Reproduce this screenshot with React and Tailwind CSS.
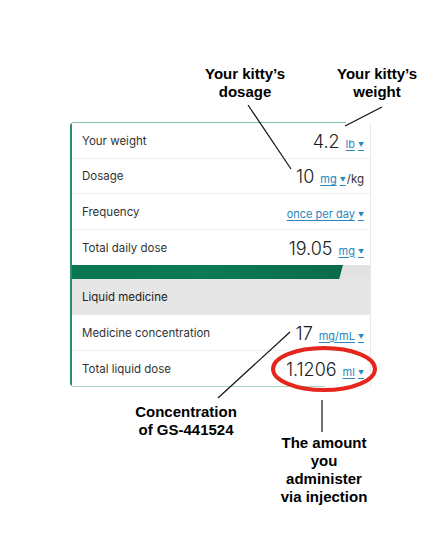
import React from 'react';

const Unit = ({ children }) => (
  <span className="text-[11px] text-[#2a86bb] underline underline-offset-2 decoration-[#2a86bb]">
    {children}
    <span className="ml-[3px] text-[6px] relative -top-[1px]">▼</span>
  </span>
);

function Row({ label, value, unit, suffix, last }) {
  return (
    <div className={`h-[35.5px] flex items-center justify-between pt-[2px] pl-[10px] pr-[6px] bg-white ${last ? '' : 'border-b border-[#f0f0f0]'}`}>
      <span className="text-[11.5px] text-[#333]">{label}</span>
      <div className="flex items-baseline gap-[6px]">
        {value && <span className="text-[18px] font-light text-[#1a1a1a]">{value}</span>}
        <span>
          <Unit>{unit}</Unit>
          {suffix && <span className="text-[11.5px] text-[#333] ml-[1px]">{suffix}</span>}
        </span>
      </div>
    </div>
  );
}

function Note({ className, children }) {
  return (
    <div className={`absolute text-center font-bold text-[15px] leading-[18px] text-black ${className}`}
      style={{ fontFamily: '"Liberation Sans", Arial, sans-serif' }}>
      {children}
    </div>
  );
}

export default function App() {
  return (
    <div className="relative w-[440px] h-[546px] bg-white overflow-hidden" style={{ fontFamily: 'Inter, "Noto Sans", sans-serif' }}>
      <div className="pt-[123px] pl-[70px]">
        <div className="relative w-[301px] border-l-2 border-[#2e8b6e] rounded-l-[3px] border-r border-r-[#e8e8e8]">
          <div className="absolute -top-px left-0 w-[274px] h-px bg-[#7cbfa6] rounded-tl-[3px]" />
          <Row label="Your weight" value="4.2" unit="lb" />
          <Row label="Dosage" value="10" unit="mg" suffix="/kg" />
          <Row label="Frequency" unit="once per day" />
          <Row label="Total daily dose" value="19.05" unit="mg" last />

          <div className="h-[14px] flex bg-[#e2e2e2]">
            <div className="w-[271px] h-full bg-gradient-to-r from-[#087553] via-[#0b7a55] to-[#0a6b4c] [clip-path:polygon(0_0,100%_0,98.6%_100%,0_100%)]" />
          </div>

          <div className="h-[36px] flex items-center pl-[10px] pt-[1px] bg-[#e6e6e6]">
            <span className="text-[11.5px] text-[#222]">Liquid medicine</span>
          </div>
          <Row label="Medicine concentration" value="17" unit="mg/mL" />
          <Row label="Total liquid dose" value="1.1206" unit="ml" last />
          <div className="absolute -bottom-px left-0 w-[253px] h-px bg-[#a9d3c4]" />
        </div>
      </div>

      <Note className="left-[185px] top-[65px] w-[120px]">Your kitty’s<br />dosage</Note>
      <Note className="left-[317px] top-[65px] w-[120px]">Your kitty’s<br />weight</Note>
      <Note className="left-[116px] top-[403px] w-[140px]">Concentration<br />of GS-441524</Note>
      <Note className="left-[254px] top-[434px] w-[140px] leading-[17.5px]">The amount<br />you<br />administer<br />via injection</Note>

      <svg className="absolute inset-0 pointer-events-none" width="440" height="546">
        <line x1="248" y1="105" x2="291" y2="169" stroke="#111" strokeWidth="1.2" />
        <line x1="382" y1="107" x2="345" y2="126" stroke="#111" strokeWidth="1.2" />
        <line x1="290" y1="332" x2="218" y2="398" stroke="#111" strokeWidth="1.2" />
        <line x1="322" y1="400" x2="322" y2="432" stroke="#111" strokeWidth="1.2" />
        <ellipse cx="324" cy="369" rx="51" ry="21" fill="none" stroke="#e5261c" strokeWidth="4" />
      </svg>
    </div>
  );
}
